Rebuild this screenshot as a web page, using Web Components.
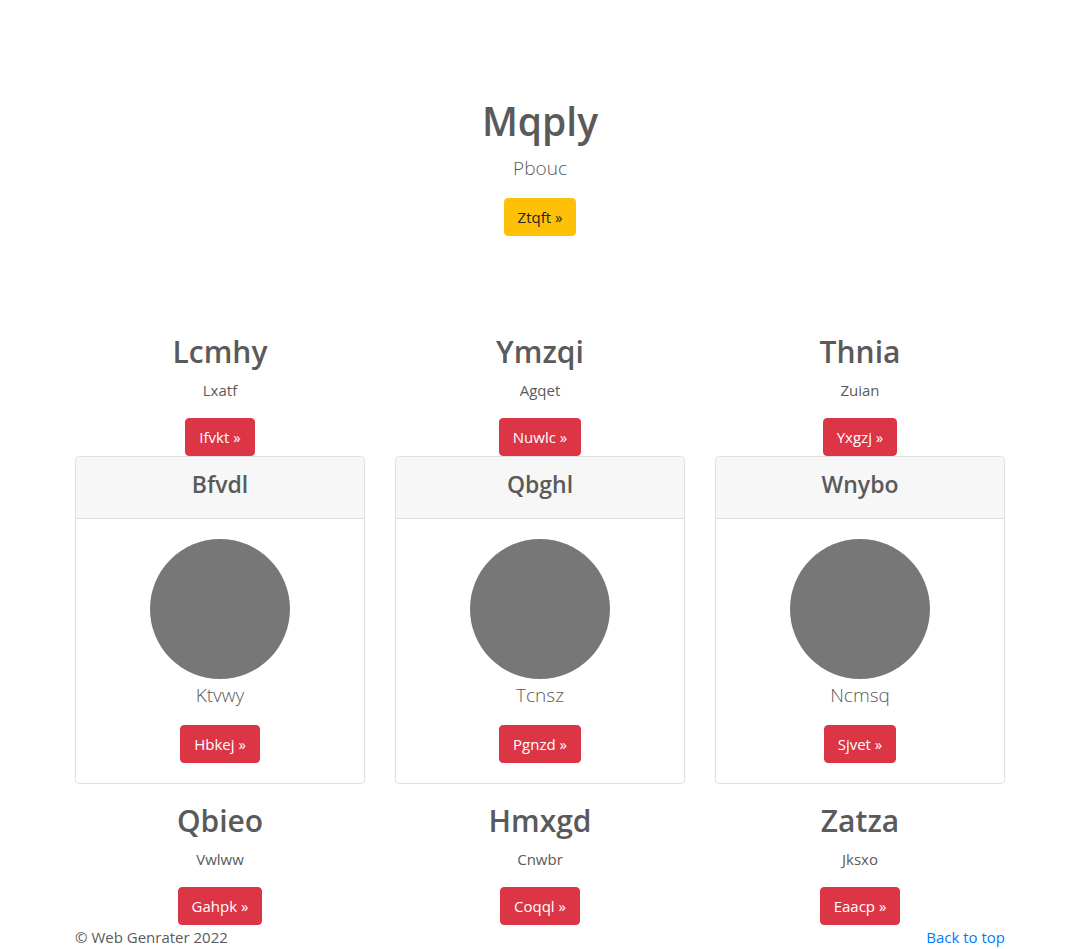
<!DOCTYPE html>
<html lang="en">
<head>
<meta charset="utf-8">
<meta name="viewport" content="width=device-width, initial-scale=1">
<title>Web Genrater</title>
<style>
  body {
    margin: 0;
    background: #fff;
    color: #5a5a5a;
    font: 400 15px/24px "Open Sans", "Noto Sans", sans-serif;
  }
</style>
</head>
<body>
<site-page id="top">
  <hero-banner>
    <span slot="title">Mqply</span>
    <span slot="lead">Pbouc</span>
    <action-button tone="warning" slot="action">Ztqft »</action-button>
  </hero-banner>

  <column-row>
    <text-feature><span slot="title">Lcmhy</span>Lxatf<action-button slot="action">Ifvkt »</action-button></text-feature>
    <text-feature><span slot="title">Ymzqi</span>Agqet<action-button slot="action">Nuwlc »</action-button></text-feature>
    <text-feature><span slot="title">Thnia</span>Zuian<action-button slot="action">Yxgzj »</action-button></text-feature>
  </column-row>

  <column-row>
    <profile-card><span slot="title">Bfvdl</span>Ktvwy<action-button slot="action">Hbkej »</action-button></profile-card>
    <profile-card><span slot="title">Qbghl</span>Tcnsz<action-button slot="action">Pgnzd »</action-button></profile-card>
    <profile-card><span slot="title">Wnybo</span>Ncmsq<action-button slot="action">Sjvet »</action-button></profile-card>
  </column-row>

  <column-row>
    <text-feature><span slot="title">Qbieo</span>Vwlww<action-button slot="action">Gahpk »</action-button></text-feature>
    <text-feature><span slot="title">Hmxgd</span>Cnwbr<action-button slot="action">Coqql »</action-button></text-feature>
    <text-feature><span slot="title">Zatza</span>Jksxo<action-button slot="action">Eaacp »</action-button></text-feature>
  </column-row>

  <site-footer>© Web Genrater 2022</site-footer>
</site-page>

<script>
  const define = (name, markup) => {
    const template = document.createElement('template');
    template.innerHTML = markup;
    customElements.define(name, class extends HTMLElement {
      constructor() {
        super();
        this.attachShadow({ mode: 'open' }).append(template.content.cloneNode(true));
      }
    });
  };

  define('site-page', `
    <style>
      :host { display: block; max-width: 930px; margin: 0 auto; padding: 0 15px; }
    </style>
    <main><slot></slot></main>`);

  define('hero-banner', `
    <style>
      :host { display: block; padding: 96px 0 95px; text-align: center; }
      h1 { margin: 0 0 6px; font-size: 39px; font-weight: 600; line-height: 50px; }
      p { margin: 0 0 14px; font-size: 19px; font-weight: 300; line-height: 32px; }
    </style>
    <h1><slot name="title"></slot></h1>
    <p><slot name="lead"></slot></p>
    <slot name="action"></slot>`);

  define('column-row', `
    <style>
      :host { display: grid; grid-template-columns: repeat(auto-fit, minmax(240px, 1fr)); column-gap: 30px; }
    </style>
    <slot></slot>`);

  define('text-feature', `
    <style>
      :host { display: block; text-align: center; }
      h2 { margin: 0 0 6px; font-size: 30px; font-weight: 600; line-height: 41px; }
      p { margin: 0 0 16px; }
    </style>
    <h2><slot name="title"></slot></h2>
    <p><slot></slot></p>
    <slot name="action"></slot>`);

  define('profile-card', `
    <style>
      :host {
        display: block; margin-bottom: 16px; overflow: hidden; text-align: center;
        border: 1px solid #dfdfdf; border-radius: 4px; background: #fff;
      }
      header { padding: 12px 20px; background: #f7f7f7; border-bottom: 1px solid #dfdfdf; }
      h4 { margin: 0 0 6px; font-size: 23px; font-weight: 600; line-height: 31px; }
      .body { padding: 20px; }
      svg { display: block; width: 140px; height: 140px; margin: 0 auto; }
      p { margin: 0 0 14px; font-size: 19px; font-weight: 300; line-height: 32px; }
    </style>
    <header><h4><slot name="title"></slot></h4></header>
    <div class="body">
      <svg viewBox="0 0 140 140" aria-hidden="true"><circle cx="70" cy="70" r="70" fill="#777"/></svg>
      <p><slot></slot></p>
      <slot name="action"></slot>
    </div>`);

  define('action-button', `
    <style>
      :host { display: flex; justify-content: center; --fill: #dc3545; --ink: #fff; }
      :host([tone="warning"]) { --fill: #ffc107; --ink: #212529; }
      button {
        padding: 6px 13px; border: 1px solid var(--fill); border-radius: 4px;
        background: var(--fill); color: var(--ink); font: inherit; cursor: pointer;
      }
    </style>
    <button type="button"><slot></slot></button>`);

  define('site-footer', `
    <style>
      :host { display: block; }
      footer { display: flex; justify-content: space-between; }
      a { color: #007bff; text-decoration: none; }
    </style>
    <footer><span><slot></slot></span><a href="#top">Back to top</a></footer>`);
</script>
</body>
</html>
